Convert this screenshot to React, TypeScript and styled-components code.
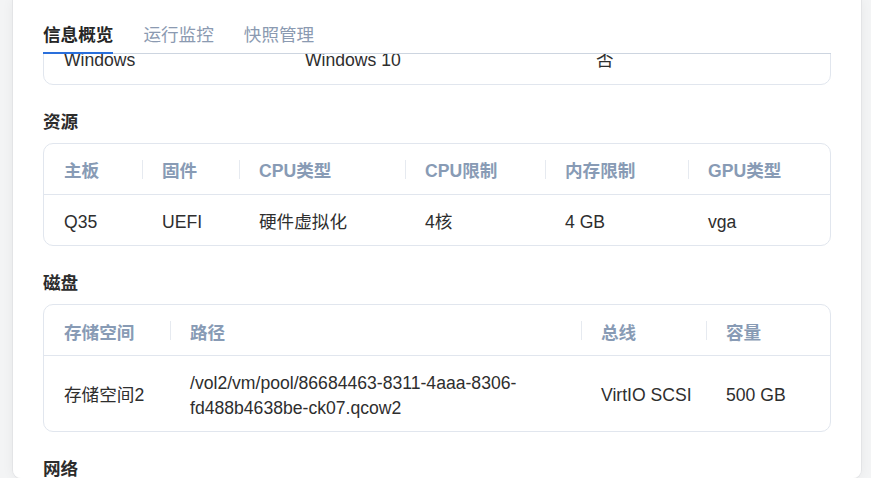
import { useEffect, useRef } from 'react'
import styled, { createGlobalStyle } from 'styled-components'

const GlobalStyle = createGlobalStyle`
  html, body {
    margin: 0;
    padding: 0;
    background: #f3f4f5;
  }
  * {
    box-sizing: border-box;
  }
`

const FONT = `'Liberation Sans', 'Noto Sans CJK SC', sans-serif`

interface Column {
  key: string;
  title: string;
}

interface TableProps {
  widths: string;
  columns: Column[];
  rows: Record<string, string>[];
}

const tabs = ['信息概览', '运行监控', '快照管理']

const systemCols: Column[] = [
  { key: 'os', title: '操作系统' },
  { key: 'ver', title: '系统版本' },
  { key: 'auto', title: '开机自启' },
]
const systemRows = [{ os: 'Windows', ver: 'Windows 10', auto: '否' }]

const resourceCols: Column[] = [
  { key: 'board', title: '主板' },
  { key: 'fw', title: '固件' },
  { key: 'cpu', title: 'CPU类型' },
  { key: 'cpuLimit', title: 'CPU限制' },
  { key: 'mem', title: '内存限制' },
  { key: 'gpu', title: 'GPU类型' },
]
const resourceRows = [
  { board: 'Q35', fw: 'UEFI', cpu: '硬件虚拟化', cpuLimit: '4核', mem: '4 GB', gpu: 'vga' },
]

const diskCols: Column[] = [
  { key: 'pool', title: '存储空间' },
  { key: 'path', title: '路径' },
  { key: 'bus', title: '总线' },
  { key: 'size', title: '容量' },
]
const diskRows = [
  {
    pool: '存储空间2',
    path: '/vol2/vm/pool/86684463-8311-4aaa-8306-fd488b4638be-ck07.qcow2',
    bus: 'VirtIO SCSI',
    size: '500 GB',
  },
]

const netCols: Column[] = [
  { key: 'nic', title: '网卡' },
  { key: 'mac', title: 'MAC地址' },
  { key: 'net', title: '网络' },
  { key: 'model', title: '型号' },
]
const netRows = [
  { nic: 'eth0', mac: '52:54:00:3a:8f:21', net: '桥接网络', model: 'VirtIO' },
  { nic: 'eth1', mac: '52:54:00:7c:12:e4', net: 'NAT', model: 'e1000' },
]

const DataTable = ({ widths, columns, rows }: TableProps) => (
  <Grid $widths={widths}>
    {columns.map((c, i) => (
      <HeadCell key={c.key} $first={i === 0}>{c.title}</HeadCell>
    ))}
    {rows.map((r, ri) =>
      columns.map((c) => (
        <BodyCell key={c.key + ri} $last={ri === rows.length - 1}>{r[c.key]}</BodyCell>
      ))
    )}
  </Grid>
)

const App = () => {
  const panelRef = useRef<HTMLDivElement>(null)
  const firstCardRef = useRef<HTMLDivElement>(null)

  useEffect(() => {
    const panel = panelRef.current
    const card = firstCardRef.current
    if (panel && card) {
      panel.scrollTop = card.offsetTop + card.offsetHeight - 85
    }
  }, [])

  return (
    <>
      <GlobalStyle />
      <Page>
        <Panel ref={panelRef}>
          <TabBar>
            {tabs.map((t, i) => (
              <Tab key={t} $active={i === 0}>{t}</Tab>
            ))}
          </TabBar>

          <Section>
            <SectionTitle>系统</SectionTitle>
            <Card ref={firstCardRef}>
              <DataTable widths="241px 291px 1fr" columns={systemCols} rows={systemRows} />
            </Card>
          </Section>

          <Section>
            <SectionTitle>资源</SectionTitle>
            <Card>
              <DataTable widths="98px 97px 166px 140px 143px 1fr" columns={resourceCols} rows={resourceRows} />
            </Card>
          </Section>

          <Section>
            <SectionTitle>磁盘</SectionTitle>
            <Card>
              <DataTable widths="126px 411px 125px 1fr" columns={diskCols} rows={diskRows} />
            </Card>
          </Section>

          <Section>
            <SectionTitle>网络</SectionTitle>
            <Card>
              <DataTable widths="126px 250px 250px 1fr" columns={netCols} rows={netRows} />
            </Card>
          </Section>
        </Panel>
      </Page>
    </>
  )
}

const Page = styled.div`
  height: 478px;
  padding-left: 12px;
  font-family: ${FONT};
  overflow: hidden;
`

const Panel = styled.div`
  position: relative;
  width: 850px;
  height: 479px;
  padding: 0 30px 30px;
  background: #fff;
  border: 1px solid #e3e4e6;
  border-top: none;
  border-radius: 0 0 9px 9px;
  box-shadow: 0 0 12px rgba(0, 0, 0, 0.05);
  overflow-y: auto;
  scrollbar-width: none;
  &::-webkit-scrollbar {
    display: none;
  }
`

const TabBar = styled.div`
  position: sticky;
  top: 0;
  z-index: 2;
  height: 54px;
  display: flex;
  align-items: flex-end;
  gap: 30px;
  background: #fff;
  border-bottom: 1px solid #cdd5e0;
`

const Tab = styled.div<{ $active: boolean }>`
  font-size: 17.6px;
  line-height: 26px;
  padding-bottom: 4px;
  font-weight: ${(p) => (p.$active ? 700 : 400)};
  color: ${(p) => (p.$active ? '#262626' : '#8b9ab1')};
  border-bottom: 2px solid ${(p) => (p.$active ? '#2a6fdb' : 'transparent')};
  margin-bottom: -1px;
`

const Section = styled.div`
  margin-top: 24px;
`

const SectionTitle = styled.div`
  font-size: 17.6px;
  line-height: 26px;
  font-weight: 700;
  color: #2c2c2c;
  margin-bottom: 8px;
`

const Card = styled.div`
  border: 1px solid #e1e6ee;
  border-radius: 10px;
  overflow: hidden;
`

const Grid = styled.div<{ $widths: string }>`
  display: grid;
  grid-template-columns: ${(p) => p.$widths};
`

const HeadCell = styled.div<{ $first: boolean }>`
  position: relative;
  height: 51px;
  padding: 2px 10px 0 20px;
  display: flex;
  align-items: center;
  font-size: 17.6px;
  font-weight: 700;
  color: #889bb5;
  border-bottom: 1px solid #e1e6ee;

  &::before {
    content: '';
    display: ${(p) => (p.$first ? 'none' : 'block')};
    position: absolute;
    left: 0;
    top: 16px;
    width: 1px;
    height: 19px;
    background: #e6eaf0;
  }
`

const BodyCell = styled.div<{ $last: boolean }>`
  padding: 15px 10px 11px 20px;
  display: flex;
  align-items: center;
  font-size: 17.6px;
  line-height: 24.5px;
  color: #2e2e2e;
  border-bottom: ${(p) => (p.$last ? 'none' : '1px solid #e1e6ee')};
`

export default App
